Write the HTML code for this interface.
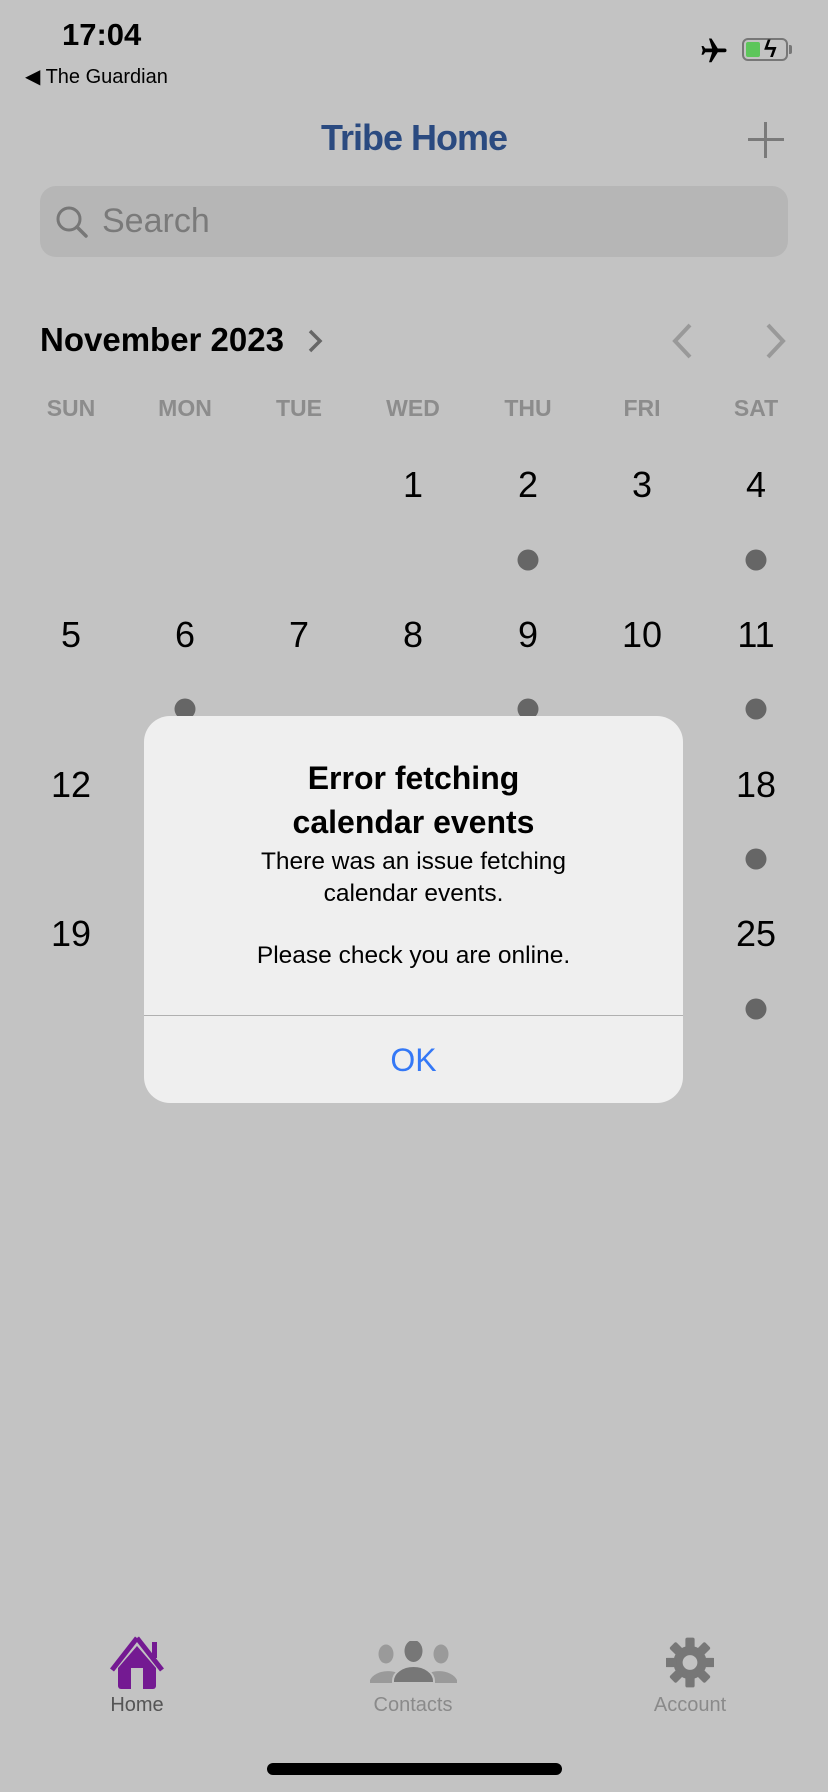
<!DOCTYPE html>
<html><head><meta charset="utf-8"><style>
*{margin:0;padding:0;box-sizing:border-box}
body{width:828px;height:1792px;background:#c3c3c3;font-family:"Liberation Sans",sans-serif;position:relative;overflow:hidden;color:#000}
.a{position:absolute}
.c{transform:translateX(-50%);text-align:center;white-space:nowrap}
.wd{top:395px;font-size:23px;color:#8c8c8c;font-weight:600}
.dn{font-size:36px;transform:translate(-50%,-50%)}
.dot{width:21px;height:21px;border-radius:50%;background:#666;transform:translate(-50%,-50%)}
</style></head><body>
<div class="a" style="left:62px;top:17px;font-size:31px;font-weight:600">17:04</div>
<div class="a" style="left:25px;top:64px;font-size:20px;font-weight:500">◀ The Guardian</div>
<svg class="a" style="left:698px;top:36px" width="32" height="30" viewBox="0 0 24 24"><path d="M21 16v-2l-8-5V3.5a1.5 1.5 0 0 0-3 0V9l-8 5v2l8-2.5V19l-2 1.5V22l3.5-1 3.5 1v-1.5L13 19v-5.5z" fill="#000" transform="rotate(90 12 12)"/></svg>
<div class="a" style="left:742px;top:38px;width:46px;height:23px;border:2px solid #777;border-radius:6px"></div>
<div class="a" style="left:746px;top:42px;width:14px;height:15px;background:#5dc65b;border-radius:2px"></div>
<div class="a" style="left:789px;top:45px;width:3px;height:9px;background:#777;border-radius:0 2px 2px 0"></div>
<div class="a" style="left:764px;top:36px;font-size:24px;font-weight:700">ϟ</div>
<div class="a c" style="left:414px;top:117px;font-size:36px;font-weight:700;color:#2a4a80;letter-spacing:-1px">Tribe Home</div>
<div class="a" style="left:748px;top:138px;width:36px;height:3px;background:#7a7a7a"></div>
<div class="a" style="left:764px;top:122px;width:3px;height:36px;background:#7a7a7a"></div>
<div class="a" style="left:40px;top:186px;width:748px;height:71px;background:#b6b6b6;border-radius:16px"></div>
<svg class="a" style="left:55px;top:205px" width="34" height="34" viewBox="0 0 34 34"><circle cx="14" cy="14" r="11" stroke="#777" stroke-width="3" fill="none"/><line x1="22" y1="22" x2="31" y2="31" stroke="#777" stroke-width="3.5" stroke-linecap="round"/></svg>
<div class="a" style="left:102px;top:202px;font-size:34px;color:#7a7a7a">Search</div>
<div class="a" style="left:40px;top:321px;font-size:33px;font-weight:600">November 2023</div>
<svg class="a" style="left:305px;top:328px" width="20" height="26" viewBox="0 0 20 26"><path d="M5 3l10 10-10 10" stroke="#666" stroke-width="3.5" fill="none"/></svg>
<svg class="a" style="left:670px;top:322px" width="26" height="38" viewBox="0 0 26 38"><path d="M20 3L5 19l15 16" stroke="#999" stroke-width="4" fill="none"/></svg>
<svg class="a" style="left:762px;top:322px" width="26" height="38" viewBox="0 0 26 38"><path d="M6 3l15 16-15 16" stroke="#999" stroke-width="4" fill="none"/></svg>
<div class="a c wd" style="left:71px">SUN</div><div class="a c wd" style="left:185px">MON</div><div class="a c wd" style="left:299px">TUE</div><div class="a c wd" style="left:413px">WED</div><div class="a c wd" style="left:528px">THU</div><div class="a c wd" style="left:642px">FRI</div><div class="a c wd" style="left:756px">SAT</div>
<div class="a dn" style="left:413px;top:485px">1</div><div class="a dn" style="left:528px;top:485px">2</div><div class="a dn" style="left:642px;top:485px">3</div><div class="a dn" style="left:756px;top:485px">4</div>
<div class="a dot" style="left:528px;top:560px"></div><div class="a dot" style="left:756px;top:560px"></div>
<div class="a dn" style="left:71px;top:635px">5</div><div class="a dn" style="left:185px;top:635px">6</div><div class="a dn" style="left:299px;top:635px">7</div><div class="a dn" style="left:413px;top:635px">8</div><div class="a dn" style="left:528px;top:635px">9</div><div class="a dn" style="left:642px;top:635px">10</div><div class="a dn" style="left:756px;top:635px">11</div>
<div class="a dot" style="left:185px;top:709px"></div><div class="a dot" style="left:528px;top:709px"></div><div class="a dot" style="left:756px;top:709px"></div>
<div class="a dn" style="left:71px;top:785px">12</div><div class="a dn" style="left:756px;top:785px">18</div>
<div class="a dot" style="left:756px;top:859px"></div>
<div class="a dn" style="left:71px;top:934px">19</div><div class="a dn" style="left:756px;top:934px">25</div>
<div class="a dot" style="left:756px;top:1009px"></div>
<div class="a" style="left:144px;top:716px;width:539px;height:387px;background:#efefef;border-radius:26px;overflow:hidden">
 <div style="position:absolute;top:40px;width:100%;text-align:center;font-size:32px;font-weight:600;line-height:44px">Error fetching<br>calendar events</div>
 <div style="position:absolute;top:130px;width:100%;text-align:center;font-size:24.5px;line-height:32px">There was an issue fetching<br>calendar events.</div>
 <div style="position:absolute;top:226px;width:100%;text-align:center;font-size:24.5px">Please check you are online.</div>
 <div style="position:absolute;top:299px;width:100%;height:1px;background:#b0b0b0"></div>
 <div style="position:absolute;top:326px;width:100%;text-align:center;font-size:32px;color:#3478f6">OK</div>
</div>
<svg class="a" style="left:108px;top:1634px" width="58" height="56" viewBox="0 0 58 56"><path d="M29 4L4 36M29 4l25 32" stroke="#741a92" stroke-width="5" fill="none"/><path d="M29 12L10 34v18a3 3 0 0 0 3 3h32a3 3 0 0 0 3-3V34z" fill="#741a92"/><rect x="44" y="8" width="5" height="16" fill="#741a92"/><rect x="23" y="34" width="12" height="21" fill="#c3c3c3"/></svg>
<div class="a c" style="left:137px;top:1694px;font-size:20px;color:#555">Home</div>
<svg class="a" style="left:370px;top:1641px" width="87" height="42" viewBox="0 0 87 42"><ellipse cx="16" cy="13" rx="7.5" ry="9.5" fill="#9a9a9a"/><ellipse cx="71" cy="13" rx="7.5" ry="9.5" fill="#9a9a9a"/><path d="M0 42v-3a19 13 0 0 1 36 0v3z" fill="#9a9a9a"/><path d="M51 42v-3a19 13 0 0 1 36 0v3z" fill="#9a9a9a"/><ellipse cx="43.5" cy="10" rx="9" ry="11" fill="#777"/><path d="M23 42v-2a20.5 15 0 0 1 41 0v2z" fill="#777" stroke="#c3c3c3" stroke-width="2"/></svg>
<div class="a c" style="left:413px;top:1694px;font-size:20px;color:#8a8a8a">Contacts</div>
<svg class="a" style="left:666px;top:1637px" width="48" height="51" viewBox="0 0 52 54"><g transform="translate(26,27)" fill="#777"><circle r="18"/><g id="t"><rect x="-5" y="-27" width="10" height="12" rx="2"/></g><use href="#t" transform="rotate(45)"/><use href="#t" transform="rotate(90)"/><use href="#t" transform="rotate(135)"/><use href="#t" transform="rotate(180)"/><use href="#t" transform="rotate(225)"/><use href="#t" transform="rotate(270)"/><use href="#t" transform="rotate(315)"/><circle r="8" fill="#c3c3c3"/></g></svg>
<div class="a c" style="left:690px;top:1694px;font-size:20px;color:#8a8a8a">Account</div>
<div class="a" style="left:267px;top:1763px;width:295px;height:12px;background:#000;border-radius:6px"></div>
</body></html>
